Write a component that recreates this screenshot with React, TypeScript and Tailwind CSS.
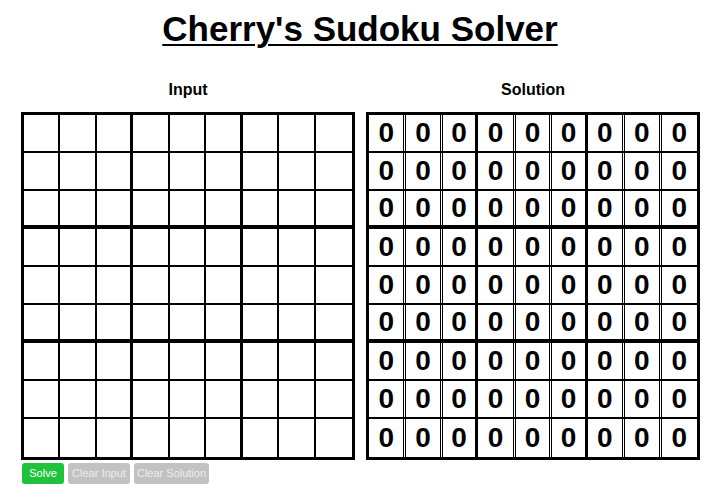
const ROWS = Array.from({ length: 9 }, (_, i) => i);

function cellBorders(r: number, c: number) {
  const right = c === 8 ? "" : c === 2 || c === 5 ? "border-r-[3px]" : "border-r-2";
  const bottom = r === 8 ? "" : r === 2 || r === 5 ? "border-b-[4px]" : "border-b-2";
  return `${right} ${bottom}`;
}

function InputGrid() {
  return (
    <div className="grid h-[348px] w-[334px] grid-cols-9 grid-rows-9 border-[3px] border-black bg-white">
      {ROWS.map((r) =>
        ROWS.map((c) => (
          <div key={`${r}-${c}`} className={`border-black ${cellBorders(r, c)}`} />
        ))
      )}
    </div>
  );
}

function SolutionGrid() {
  return (
    <div className="grid h-[348px] w-[334px] grid-cols-9 grid-rows-9 border-[3px] border-black bg-white">
      {ROWS.map((r) =>
        ROWS.map((c) => {
          const boxEnd = c === 2 || c === 5;
          const boxStart = c === 0 || c === 3 || c === 6;
          const bottom = r === 8 ? "" : r === 2 || r === 5 ? "border-b-[4px]" : "border-b-2";
          return (
            <div
              key={`${r}-${c}`}
              className={`flex border-black ${boxEnd ? "border-r-[3px]" : ""} ${bottom}`}
            >
              <div
                className={`flex flex-1 items-center justify-center border-black ${
                  c !== 8 && !boxEnd ? "mr-px border-r" : ""
                } ${!boxStart ? "border-l" : ""} text-[28px] font-bold leading-none text-black`}
              >
                0
              </div>
            </div>
          );
        })
      )}
    </div>
  );
}

export default function App() {
  return (
    <div
      className="min-h-[499px] w-[720px] bg-white text-black"
      style={{ fontFamily: '"Liberation Sans", Arial, sans-serif' }}
    >
      <h1 className="pt-[9px] text-center text-[35px] font-bold leading-[40px] underline decoration-2 underline-offset-[3px]">
        Cherry's Sudoku Solver
      </h1>
      <div className="mt-[31px] flex gap-[11px] pl-[21px]">
        <div className="flex flex-col">
          <h2 className="mb-[13px] text-center text-[16px] font-bold leading-[19px]">Input</h2>
          <InputGrid />
        </div>
        <div className="flex flex-col">
          <h2 className="mb-[13px] text-center text-[16px] font-bold leading-[19px]">Solution</h2>
          <SolutionGrid />
        </div>
      </div>
      <div className="mt-[3px] flex gap-[4px] pl-[22px]">
        <button className="h-[21px] w-[42px] rounded-[3px] bg-[#1fc33b] text-[11px] text-white">
          Solve
        </button>
        <button className="h-[21px] w-[62px] rounded-[3px] bg-[#c2c2c2] text-[11px] text-[#ececec]">
          Clear Input
        </button>
        <button className="h-[21px] w-[75px] rounded-[3px] bg-[#c2c2c2] text-[11px] text-[#ececec]">
          Clear Solution
        </button>
      </div>
    </div>
  );
}
